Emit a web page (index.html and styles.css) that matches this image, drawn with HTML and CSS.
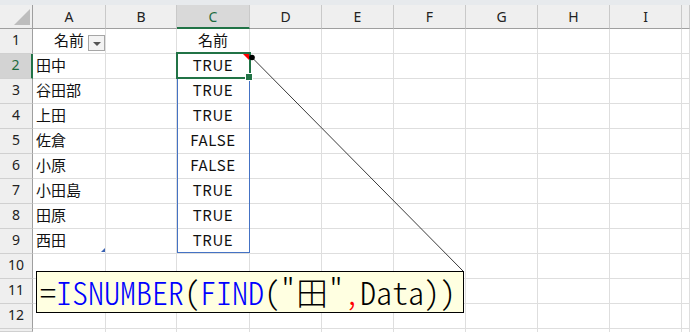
FILE: index.html
```html
<!DOCTYPE html>
<html lang="ja">
<head>
<meta charset="utf-8">
<link rel="stylesheet" href="styles.css">
</head>
<body>
<div class="topband"></div>
<div class="sheet">
  <div class="ch corner"><span class="tri"></span></div>
  <div class="ch">A</div><div class="ch">B</div><div class="ch sel">C</div><div class="ch">D</div><div class="ch">E</div><div class="ch">F</div><div class="ch">G</div><div class="ch">H</div><div class="ch">I</div><div class="ch"></div>

  <div class="rh">1</div><div class="c ctr">名前</div><div class="c"></div><div class="c ctr">名前</div><div class="c"></div><div class="c"></div><div class="c"></div><div class="c"></div><div class="c"></div><div class="c"></div><div class="c"></div>
  <div class="rh sel">2</div><div class="c">田中</div><div class="c"></div><div class="c ctr en">TRUE</div><div class="c"></div><div class="c"></div><div class="c"></div><div class="c"></div><div class="c"></div><div class="c"></div><div class="c"></div>
  <div class="rh">3</div><div class="c">谷田部</div><div class="c"></div><div class="c ctr en">TRUE</div><div class="c"></div><div class="c"></div><div class="c"></div><div class="c"></div><div class="c"></div><div class="c"></div><div class="c"></div>
  <div class="rh">4</div><div class="c">上田</div><div class="c"></div><div class="c ctr en">TRUE</div><div class="c"></div><div class="c"></div><div class="c"></div><div class="c"></div><div class="c"></div><div class="c"></div><div class="c"></div>
  <div class="rh">5</div><div class="c">佐倉</div><div class="c"></div><div class="c ctr en">FALSE</div><div class="c"></div><div class="c"></div><div class="c"></div><div class="c"></div><div class="c"></div><div class="c"></div><div class="c"></div>
  <div class="rh">6</div><div class="c">小原</div><div class="c"></div><div class="c ctr en">FALSE</div><div class="c"></div><div class="c"></div><div class="c"></div><div class="c"></div><div class="c"></div><div class="c"></div><div class="c"></div>
  <div class="rh">7</div><div class="c">小田島</div><div class="c"></div><div class="c ctr en">TRUE</div><div class="c"></div><div class="c"></div><div class="c"></div><div class="c"></div><div class="c"></div><div class="c"></div><div class="c"></div>
  <div class="rh">8</div><div class="c">田原</div><div class="c"></div><div class="c ctr en">TRUE</div><div class="c"></div><div class="c"></div><div class="c"></div><div class="c"></div><div class="c"></div><div class="c"></div><div class="c"></div>
  <div class="rh">9</div><div class="c">西田</div><div class="c"></div><div class="c ctr en">TRUE</div><div class="c"></div><div class="c"></div><div class="c"></div><div class="c"></div><div class="c"></div><div class="c"></div><div class="c"></div>
  <div class="rh">10</div><div class="c"></div><div class="c"></div><div class="c"></div><div class="c"></div><div class="c"></div><div class="c"></div><div class="c"></div><div class="c"></div><div class="c"></div><div class="c"></div>
  <div class="rh">11</div><div class="c"></div><div class="c"></div><div class="c"></div><div class="c"></div><div class="c"></div><div class="c"></div><div class="c"></div><div class="c"></div><div class="c"></div><div class="c"></div>
  <div class="rh">12</div><div class="c"></div><div class="c"></div><div class="c"></div><div class="c"></div><div class="c"></div><div class="c"></div><div class="c"></div><div class="c"></div><div class="c"></div><div class="c"></div>
  <div class="rh"></div><div class="c"></div><div class="c"></div><div class="c"></div><div class="c"></div><div class="c"></div><div class="c"></div><div class="c"></div><div class="c"></div><div class="c"></div><div class="c"></div>
</div>

<div class="filter-btn"><span class="arrow"></span></div>
<div class="table-range"></div>
<div class="active-cell"></div>
<div class="fill-handle"></div>
<div class="comment-mark"></div>
<div class="resize-handle"></div>

<svg class="connector" width="690" height="332" viewBox="0 0 690 332">
  <line x1="252" y1="57.5" x2="463" y2="271" stroke="#3a3a3a" stroke-width="1"/>
  <circle cx="252" cy="57.5" r="2.8" fill="#000"/>
</svg>

<div class="comment"><span class="k">=</span><span class="fn">ISNUMBER</span><span class="k">(</span><span class="fn">FIND</span><span class="k">("田"</span><span class="sep">,</span><span class="k">Data))</span></div>
</body>
</html>
```
FILE: styles.css
```css
html, body {
  margin: 0;
  padding: 0;
  background: #ffffff;
  overflow: hidden;
}
body {
  width: 690px;
  height: 332px;
  position: relative;
  font-family: "Noto Sans CJK JP", "Noto Sans", sans-serif;
}
.topband {
  height: 5px;
  background: #e7eaed;
}
.sheet {
  display: grid;
  grid-template-columns: 33px 73px 71px 73px 72px 72px 72px 72px 72px 72px 1fr;
  grid-template-rows: 24px repeat(12, 25px) 3px;
  overflow: hidden;
}
.ch {
  box-sizing: border-box;
  background: #efefef;
  border-right: 1px solid #c9c9c9;
  border-bottom: 1px solid #9f9f9f;
  display: flex;
  align-items: flex-start;
  justify-content: center;
  font-family: "Noto Sans", sans-serif;
  font-size: 14px;
  line-height: 16px;
  padding-top: 4px;
  color: #222;
}
.ch.corner {
  position: relative;
  border-right: 1px solid #9f9f9f;
}
.ch.corner .tri {
  position: absolute;
  left: 14px;
  top: 4px;
  width: 0;
  height: 0;
  border-left: 16px solid transparent;
  border-bottom: 16px solid #bdbdbd;
}
.ch.sel {
  background: #d9d9d9;
  color: #1d6b3f;
  border-bottom: 2px solid #217346;
}
.rh {
  box-sizing: border-box;
  background: #efefef;
  border-right: 1px solid #9f9f9f;
  border-bottom: 1px solid #d0d0d0;
  display: flex;
  align-items: center;
  justify-content: center;
  font-family: "Noto Sans", sans-serif;
  font-size: 14px;
  line-height: 16px;
  padding-bottom: 2px;
  color: #222;
}
.rh.sel {
  background: #d3d3d3;
  color: #1d6b3f;
  border-right: 2px solid #217346;
}
.c {
  box-sizing: border-box;
  border-right: 1px solid #dedede;
  border-bottom: 1px solid #dedede;
  display: flex;
  align-items: center;
  padding-left: 3px;
  padding-bottom: 3px;
  font-size: 15px;
  line-height: 18px;
  color: #111;
  white-space: nowrap;
}
.c.ctr {
  justify-content: center;
  padding-left: 0;
}
.c.en {
  letter-spacing: 0.6px;
}
.filter-btn {
  position: absolute;
  left: 88px;
  top: 35px;
  width: 17px;
  height: 16px;
  box-sizing: border-box;
  border: 1px solid #a6a6a6;
  background: #f3f3f3;
  display: flex;
  align-items: center;
  justify-content: center;
}
.filter-btn .arrow {
  width: 0;
  height: 0;
  border-left: 4px solid transparent;
  border-right: 4px solid transparent;
  border-top: 4px solid #555;
  margin-top: 1px;
}
.table-range {
  position: absolute;
  left: 177px;
  top: 78px;
  width: 73px;
  height: 175px;
  box-sizing: border-box;
  border: 1px solid #4472c4;
}
.active-cell {
  position: absolute;
  left: 176px;
  top: 52px;
  width: 75px;
  height: 27px;
  box-sizing: border-box;
  border: 2px solid #217346;
}
.fill-handle {
  position: absolute;
  left: 246px;
  top: 74px;
  width: 6px;
  height: 6px;
  background: #217346;
  box-shadow: 0 0 0 1px #ffffff;
}
.comment-mark {
  position: absolute;
  left: 243px;
  top: 54px;
  width: 0;
  height: 0;
  border-left: 6px solid transparent;
  border-top: 6px solid #ff0000;
}
.resize-handle {
  position: absolute;
  left: 101px;
  top: 248px;
  width: 0;
  height: 0;
  border-left: 4px solid transparent;
  border-bottom: 4px solid #3a62b3;
}
.connector {
  position: absolute;
  left: 0;
  top: 0;
  pointer-events: none;
}
.comment {
  position: absolute;
  left: 36px;
  top: 271px;
  width: 428px;
  height: 42px;
  box-sizing: border-box;
  border: 1px solid #000;
  background: #ffffe1;
  font-family: "Noto Sans CJK JP", "Noto Sans Mono CJK JP", "Liberation Mono", monospace;
  font-weight: 300;
  font-feature-settings: "hwid" 1;
  font-size: 32px;
  line-height: 38px;
  padding-left: 3px;
  color: #000;
  white-space: nowrap;
}
.comment .fn { color: #0000ff; }
.comment .sep { color: #ff0000; }
```
